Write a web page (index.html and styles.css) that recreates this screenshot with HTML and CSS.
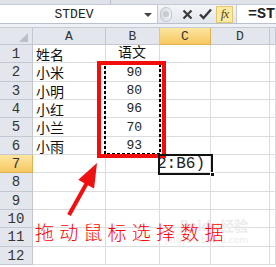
FILE: index.html
```html
<!DOCTYPE html>
<html>

<head>
    <meta charset="utf-8" />
    <title>STDEV</title>
    <link rel="stylesheet" href="styles.css">
</head>

<body>
    <div class="ribbon-edge"><span class="ribbon-tick"></span></div>

    <div class="formula-bar">
        <div class="name-box">
            <span class="name">STDEV</span>
            <span class="drop"></span>
        </div>
        <div class="tools">
            <span class="knob"><span class="knob-dot"></span></span>
            <svg class="cancel" width="11" height="11" viewBox="0 0 11 11">
                <path d="M1.5 1.5 L9.5 9.5 M9.5 1.5 L1.5 9.5" stroke="#3a3a3a" stroke-width="2.2" />
            </svg>
            <svg class="enter" width="13" height="12" viewBox="0 0 13 12">
                <path d="M1 6.5 L4.5 10 L12 1.5" fill="none" stroke="#3a3a3a" stroke-width="2.4" />
            </svg>
            <span class="fx">fx</span>
        </div>
        <div class="formula">=STDEV(B2:B6)</div>
    </div>

    <div class="band"></div>

    <div class="sheet">
        <div class="corner">
            <svg width="9" height="9" viewBox="0 0 9 9"><path d="M9 0 L9 9 L0 9 Z" fill="#b9c0ca" /></svg>
        </div>
        <div class="ch">A</div>
        <div class="ch">B</div>
        <div class="ch sel">C</div>
        <div class="ch">D</div>
        <div class="ch"></div>

        <div class="rh">1</div>
        <div class="c txt">姓名</div>
        <div class="c txt head">语文</div>
        <div class="c"></div><div class="c"></div><div class="c"></div>

        <div class="rh">2</div>
        <div class="c txt">小米</div>
        <div class="c num">90</div>
        <div class="c"></div><div class="c"></div><div class="c"></div>

        <div class="rh">3</div>
        <div class="c txt">小明</div>
        <div class="c num">80</div>
        <div class="c"></div><div class="c"></div><div class="c"></div>

        <div class="rh">4</div>
        <div class="c txt">小红</div>
        <div class="c num">96</div>
        <div class="c"></div><div class="c"></div><div class="c"></div>

        <div class="rh">5</div>
        <div class="c txt">小兰</div>
        <div class="c num">70</div>
        <div class="c"></div><div class="c"></div><div class="c"></div>

        <div class="rh">6</div>
        <div class="c txt">小雨</div>
        <div class="c num">93</div>
        <div class="c"></div><div class="c"></div><div class="c"></div>

        <div class="rh sel">7</div>
        <div class="c"></div><div class="c"></div>
        <div class="c edit"><span>=STDEV(B2:B6)</span></div>
        <div class="c"></div><div class="c"></div>

        <div class="rh">8</div>
        <div class="c"></div><div class="c"></div><div class="c"></div><div class="c"></div><div class="c"></div>
        <div class="rh">9</div>
        <div class="c"></div><div class="c"></div><div class="c"></div><div class="c"></div><div class="c"></div>
        <div class="rh">10</div>
        <div class="c"></div><div class="c"></div><div class="c"></div><div class="c"></div><div class="c"></div>
        <div class="rh">11</div>
        <div class="c"></div><div class="c"></div><div class="c"></div><div class="c"></div><div class="c"></div>
        <div class="rh">12</div>
        <div class="c"></div><div class="c"></div><div class="c"></div><div class="c"></div><div class="c"></div>
    </div>

    <!-- overlays: copy marquee, red marker frame, active cell, arrow, caption -->
    <svg class="marquee" width="58" height="93" viewBox="0 0 58 93">
        <rect x="1" y="1" width="55" height="90" fill="none" stroke="#000" stroke-width="2" stroke-dasharray="3 2" />
    </svg>
    <div class="frame"></div>
    <div class="active"><span class="handle"></span></div>

    <svg class="arrow" width="60" height="70" viewBox="60 160 60 70">
        <path d="M67.2 214 L70.8 216 L87.9 185.2 L94.1 188.6 L97 163 L78.3 179.8 L84.4 183.2 Z" fill="#f01010" />
    </svg>

    <div class="mark">
        <span class="mark-logo">Bai<b>du</b>经验</span>
        <span class="mark-url">jingyan.baidu.com</span>
    </div>

    <div class="note">拖动鼠标选择数据</div>
</body>

</html>
```

FILE: styles.css
```css
* {
    box-sizing: border-box;
}

body {
    margin: 0;
    width: 276px;
    height: 267px;
    overflow: hidden;
    position: relative;
    background-color: #fff;
    font-family: "Liberation Mono", monospace;
    color: #222;
}

.ribbon-edge {
    height: 5px;
    background-color: #dfe3e9;
    border-bottom: 1px solid #c4cad3;
    display: flex;
}

.ribbon-tick {
    margin-left: 110px;
    width: 1px;
    background-color: #b7bec8;
}

.formula-bar {
    height: 19px;
    display: flex;
    border-bottom: 1px solid #b9c1cc;
}

.name-box {
    width: 158px;
    background-color: #fff;
    border-right: 1px solid #c3cad3;
    display: flex;
    align-items: center;
}

.name {
    flex: 1;
    text-align: center;
    font-size: 13px;
    padding-left: 4px;
}

.drop {
    width: 0;
    height: 0;
    border-left: 4px solid transparent;
    border-right: 4px solid transparent;
    border-top: 4px solid #444;
    margin-right: 5px;
    margin-top: 1px;
}

.tools {
    width: 78px;
    background: linear-gradient(#f3f5f8, #e3e7ed);
    display: flex;
    align-items: center;
}

.knob {
    width: 12px;
    height: 15px;
    margin-left: 2px;
    border-radius: 7px;
    background: linear-gradient(90deg, #d7dce3, #eef1f4);
    border: 1px solid #c2c8d0;
    display: flex;
    align-items: center;
    justify-content: center;
}

.knob-dot {
    width: 6px;
    height: 6px;
    border-radius: 3px;
    background-color: #c6ccd4;
}

.cancel {
    margin-left: 10px;
}

.enter {
    margin-left: 6px;
}

.fx {
    margin-left: 4px;
    width: 17px;
    height: 17px;
    background-color: #fbeaa6;
    border: 1px solid #e3c76d;
    font-family: "Liberation Serif", serif;
    font-style: italic;
    font-size: 13px;
    color: #5a4a10;
    text-align: center;
    line-height: 14px;
    letter-spacing: -1px;
}

.formula {
    flex: 1;
    background-color: #fff;
    border-left: 1px solid #c3cad3;
    padding-left: 11px;
    font-size: 15px;
    font-weight: bold;
    line-height: 19px;
    white-space: nowrap;
    overflow: hidden;
}

.band {
    height: 4px;
    background-color: #eef1f5;
    border-bottom: 1px solid #c4cad3;
}

.sheet {
    display: grid;
    grid-template-columns: 33px 73px 54px 51px 59px 6px;
    grid-template-rows: 17px 18px 19px 18px 18px 19px 18px 18px 19px 18px 18px 19px 18px;
}

.corner,
.ch,
.rh {
    background-color: #e3e7ed;
    border-right: 1px solid #c3c8d0;
    border-bottom: 1px solid #c3c8d0;
    color: #333;
    display: flex;
    align-items: center;
    justify-content: center;
}

.corner {
    align-items: flex-end;
    justify-content: flex-end;
    padding: 0 4px 2px 0;
}

.ch {
    font-size: 13px;
}

.rh {
    font-size: 14px;
}

.ch.sel,
.rh.sel {
    background: linear-gradient(#fde6a2, #f6c860);
    border-color: #e0b050;
}

.c {
    border-right: 1px solid #dadcdf;
    border-bottom: 1px solid #dadcdf;
    display: flex;
    align-items: center;
    overflow: hidden;
    white-space: nowrap;
}

.txt {
    font-family: "Noto Sans CJK SC", sans-serif;
    font-size: 14px;
    padding-left: 3px;
    color: #111;
}

.head {
    padding-left: 12px;
    align-items: flex-start;
    line-height: 12px;
}

.num {
    justify-content: flex-end;
    padding-right: 17px;
    font-size: 13px;
}

.edit {
    justify-content: flex-end;
    padding-right: 5px;
    font-size: 16px;
}

.marquee {
    position: absolute;
    left: 104px;
    top: 63px;
}

.frame {
    position: absolute;
    left: 97px;
    top: 61px;
    width: 69px;
    height: 97px;
    border: 4px solid #f20d0d;
}

.active {
    position: absolute;
    left: 158px;
    top: 154px;
    width: 55px;
    height: 21px;
    border: 2px solid #111;
}

.handle {
    position: absolute;
    right: -4px;
    bottom: -4px;
    width: 5px;
    height: 5px;
    background-color: #111;
    border: 1px solid #fff;
}

.arrow {
    position: absolute;
    left: 60px;
    top: 160px;
}

.mark {
    position: absolute;
    left: 160px;
    top: 216px;
    display: flex;
    flex-direction: column;
    align-items: flex-end;
    width: 88px;
    color: #ececec;
    font-family: "DejaVu Sans", sans-serif;
}

.mark-logo {
    font-family: "Noto Sans CJK SC", sans-serif;
    font-size: 14px;
    font-weight: bold;
    line-height: 18px;
}

.mark-url {
    font-size: 9px;
    line-height: 12px;
}

.note {
    position: absolute;
    left: 35px;
    top: 221px;
    font-family: "Noto Sans CJK SC", sans-serif;
    font-weight: 300;
    font-size: 19px;
    line-height: 22px;
    letter-spacing: 5.2px;
    color: #f00;
    white-space: nowrap;
}
```
